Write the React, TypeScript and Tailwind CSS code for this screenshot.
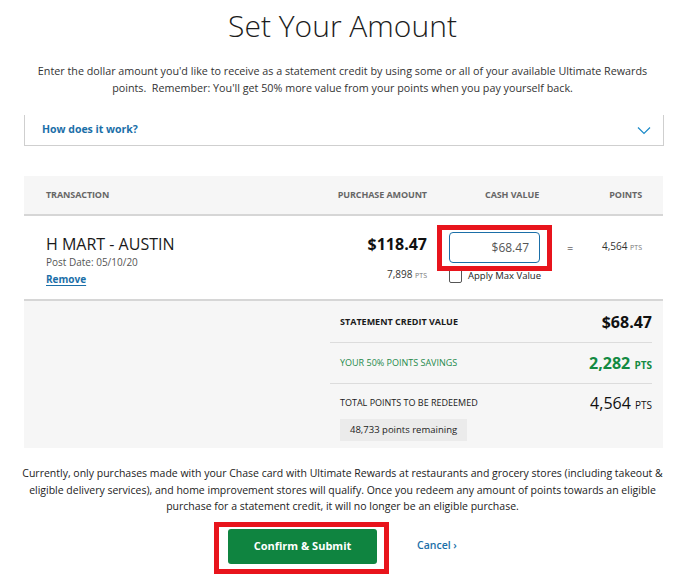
import React from "react";

export default function App() {
  return (
    <div className="w-[685px] h-[580px] overflow-hidden bg-white font-['Open_Sans',sans-serif] text-[#222]">
      <h1 className="pt-[8px] text-center text-[30px] leading-[36px] font-light text-[#1c1c1c]">Set Your Amount</h1>
      <p className="mt-[19px] px-[20px] text-center text-[10.75px] leading-[17px] text-[#333]">
        Enter the dollar amount you'd like to receive as a statement credit by using some or all of your available Ultimate Rewards points.&nbsp; Remember: You'll get 50% more value from your points when you pay yourself back.
      </p>
      <div className="ml-[24px] w-[640px]">
        <div className="mt-[18px] h-[31px] border-x border-b border-[#cfcfcf] flex items-center justify-between pl-[17px] pr-[10px]">
          <span className="text-[10.5px] font-bold text-[#1b6fa8]">How does it work?</span>
          <svg width="14" height="9" viewBox="0 0 14 9" fill="none" className="mr-[2px]">
            <path d="M1 1.5 L7 7.5 L13 1.5" stroke="#1b8ac8" strokeWidth="1.2" />
          </svg>
        </div>

        <div className="mt-[30px] w-[639px]">
          {/* header */}
          <div className="h-[40px] bg-[#f6f6f6] border-b-2 border-[#d6d6d6] flex items-center pl-[22px] pr-[21px] text-[9px] font-bold text-[#666] tracking-[-0.1px]">
            <div className="flex-1">TRANSACTION</div>
            <div className="w-[120px] text-right">PURCHASE AMOUNT</div>
            <div className="w-[163px] pl-[58px]">CASH VALUE</div>
            <div className="w-[52px] text-right">POINTS</div>
          </div>
          {/* row */}
          <div className="h-[85px] flex pl-[22px] pr-[21px] border-b-2 border-[#d6d6d6]">
            <div className="flex-1 pt-[18px]">
              <div className="text-[16px] leading-[20px] text-[#1a1a1a]">H MART - AUSTIN</div>
              <div className="text-[10px] leading-[16px] text-[#555]">Post Date: 05/10/20</div>
              <div className="mt-[2px] text-[10px] leading-[14px] font-bold text-[#1b6fa8] underline underline-offset-2">Remove</div>
            </div>
            <div className="w-[120px] text-right pt-[18px]">
              <div className="text-[16px] leading-[20px] font-bold text-[#111]">$118.47</div>
              <div className="mt-[13px] text-[10px] leading-[14px] text-[#333]">
                7,898 <span className="text-[7px] text-[#777]">PTS</span>
              </div>
            </div>
            <div className="w-[163px] flex pt-[16px]">
              <div className="ml-[22px] w-[91px]">
                <div className="relative">
                  <div className="h-[31px] w-[91px] rounded-[4px] border border-[#1b6fa8] flex items-center justify-end pr-[10px] text-[12px] text-[#555]">$68.47</div>
                  <div className="absolute -left-[12px] -right-[12px] -top-[7px] -bottom-[8px] border-[5px] border-[#e8141c] z-10 pointer-events-none" />
                </div>
                <div className="mt-[6px] flex items-center whitespace-nowrap">
                  <div className="shrink-0 w-[13px] h-[14px] rounded-[2px] border border-[#555] bg-white" />
                  <span className="ml-[6px] text-[9.5px] text-[#222]">Apply Max Value</span>
                </div>
              </div>
              <div className="ml-[27px] pt-[8px] text-[11px] leading-[16px] text-[#222]">=</div>
            </div>
            <div className="w-[52px] text-right pt-[23px] text-[10px] leading-[14px] text-[#333] whitespace-nowrap">
              4,564 <span className="text-[7px] text-[#777]">PTS</span>
            </div>
          </div>
          {/* summary */}
          <div className="h-[147px] bg-[#f6f6f6] flex justify-end pr-[11px]">
            <div className="w-[322px]">
              <div className="h-[42px] border-b border-[#dcdcdc] flex items-center justify-between px-[10px] pr-0">
                <span className="text-[9px] font-bold text-[#1a1a1a]">STATEMENT CREDIT VALUE</span>
                <span className="text-[16px] font-bold text-[#111]">$68.47</span>
              </div>
              <div className="h-[41px] border-b border-[#dcdcdc] flex items-center justify-between px-[10px] pr-0">
                <span className="text-[9px] text-[#1f8a4c]">YOUR 50% POINTS SAVINGS</span>
                <span className="text-[16px] font-bold text-[#138a42]">2,282 <span className="text-[10px]">PTS</span></span>
              </div>
              <div className="pt-[7px] px-[10px] pr-0">
                <div className="flex items-center justify-between">
                  <span className="text-[9px] text-[#1a1a1a]">TOTAL POINTS TO BE REDEEMED</span>
                  <span className="text-[16px] text-[#111]">4,564 <span className="text-[10px]">PTS</span></span>
                </div>
                <div className="mt-[2px] inline-flex h-[22px] items-center px-[10px] bg-[#ebebeb] text-[9.5px] text-[#222]">48,733 points remaining</div>
              </div>
            </div>
          </div>
        </div>
      </div>

      <p className="mt-[17px] px-[16px] text-center text-[10.5px] leading-[16.5px] text-[#222]">
        Currently, only purchases made with your Chase card with Ultimate Rewards at restaurants and grocery stores (including takeout &amp; eligible delivery services), and home improvement stores will qualify. Once you redeem any amount of points towards an eligible purchase for a statement credit, it will no longer be an eligible purchase.
      </p>

      <div className="mt-[14px] flex items-center pl-[228px]">
        <div className="relative">
          <button className="h-[35px] w-[149px] rounded-[3px] bg-[#0f8440] text-white text-[11px] font-bold">Confirm &amp; Submit</button>
          <div className="absolute -left-[14px] -right-[12px] -top-[7px] -bottom-[10px] border-[5px] border-[#e8141c] pointer-events-none" />
        </div>
        <span className="ml-[40px] text-[10.5px] font-semibold text-[#1b6fa8]">Cancel ›</span>
      </div>
    </div>
  );
}
